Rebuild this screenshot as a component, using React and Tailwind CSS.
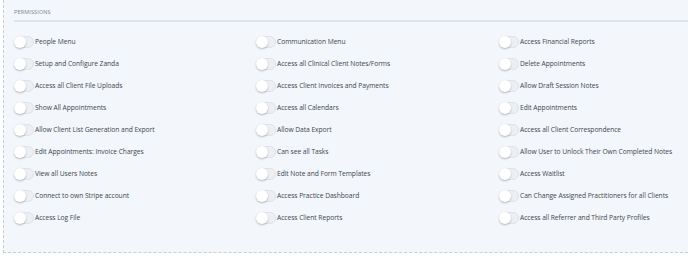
import React from "react";

const columns = [
  [
    "People Menu",
    "Setup and Configure Zanda",
    "Access all Client File Uploads",
    "Show All Appointments",
    "Allow Client List Generation and Export",
    "Edit Appointments: Invoice Charges",
    "View all Users Notes",
    "Connect to own Stripe account",
    "Access Log File",
  ],
  [
    "Communication Menu",
    "Access all Clinical Client Notes/Forms",
    "Access Client Invoices and Payments",
    "Access all Calendars",
    "Allow Data Export",
    "Can see all Tasks",
    "Edit Note and Form Templates",
    "Access Practice Dashboard",
    "Access Client Reports",
  ],
  [
    "Access Financial Reports",
    "Delete Appointments",
    "Allow Draft Session Notes",
    "Edit Appointments",
    "Access all Client Correspondence",
    "Allow User to Unlock Their Own Completed Notes",
    "Access Waitlist",
    "Can Change Assigned Practitioners for all Clients",
    "Access all Referrer and Third Party Profiles",
  ],
];

const Toggle = () => (
  <span className="relative inline-block w-[20px] h-[12px] shrink-0 rounded-full bg-[#eceff3] border border-[#dfe3e8]">
    <span className="absolute -left-[1px] -top-[1px] w-[12px] h-[12px] rounded-full bg-white shadow-[0_1px_2px_rgba(0,0,0,0.25)]" />
  </span>
);

const Permission = ({ label }) => (
  <label className="flex items-center gap-[1px] h-[22px]">
    <Toggle />
    <span className="text-[6.7px] tracking-[-0.05px] text-[#3e4650] whitespace-nowrap">{label}</span>
  </label>
);

export default function App() {
  return (
    <div className="w-[688px] h-[259px] bg-white overflow-hidden" style={{ fontFamily: '"Open Sans", sans-serif' }}>
      <div className="ml-[3px] h-[253px] bg-[#f3f6fa] border-l border-b border-dashed border-[#c9ced6] pl-[10px] pt-[8px]">
        <div className="text-[5.5px] uppercase tracking-wide text-[#7b8794] pb-[4px] border-b-2 border-[#dce5ef]">
          Permissions
        </div>
        <div className="grid grid-cols-[242px_243px_243px] pt-[9px]">
          {columns.map((col, i) => (
            <div key={i} className="flex flex-col">
              {col.map((label) => (
                <Permission key={label} label={label} />
              ))}
            </div>
          ))}
        </div>
      </div>
    </div>
  );
}
